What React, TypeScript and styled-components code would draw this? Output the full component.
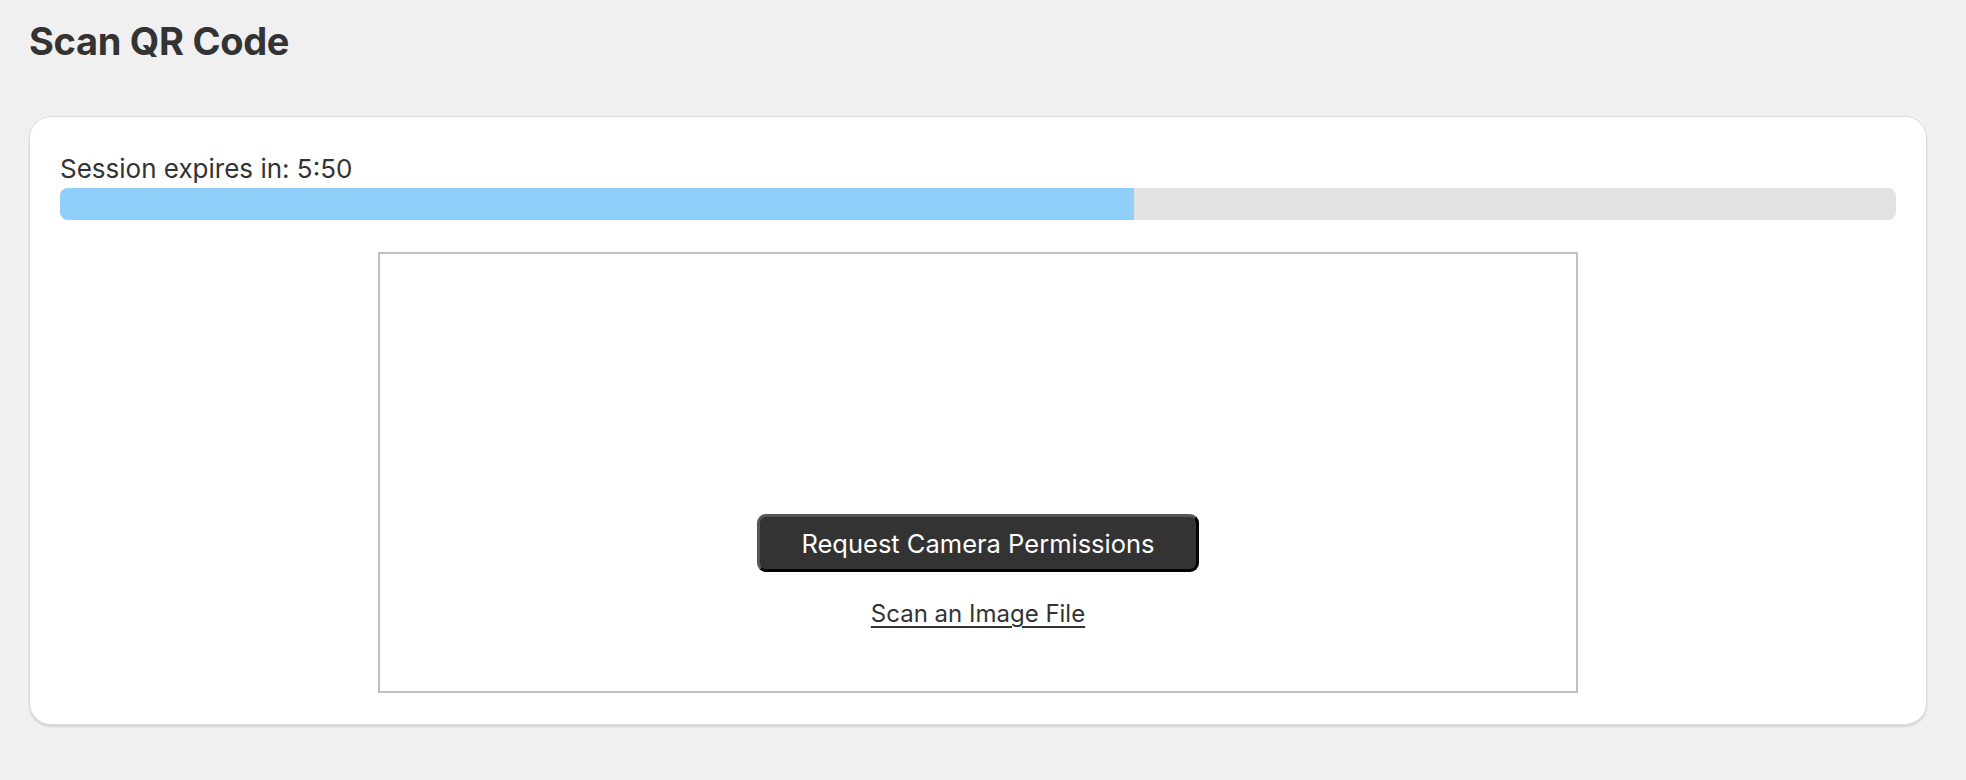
import React from "react";
import styled, { createGlobalStyle } from "styled-components";

const GlobalStyle = createGlobalStyle`
  html, body {
    margin: 0;
    padding: 0;
    background: #f0f0f0;
    font-family: Inter, "Noto Sans", "Liberation Sans", sans-serif;
    color: #333333;
  }
  * { box-sizing: border-box; }
`;

const Page = styled.main`
  padding: 0 39px 40px 29px;
`;

const Title = styled.h1`
  margin: 21px 0 0;
  font-size: 38px;
  line-height: 40px;
  font-weight: 700;
  color: #333333;
  letter-spacing: -0.3px;
`;

const Card = styled.section`
  margin-top: 55px;
  background: #ffffff;
  border: 1px solid #dcdcdc;
  border-radius: 22px;
  box-shadow: 0 2px 2px rgba(0, 0, 0, 0.12);
  padding: 30px 30px 31px;
  display: flex;
  flex-direction: column;
`;

const TimerLabel = styled.div`
  font-size: 26px;
  line-height: 30px;
  margin-top: 7px;
  color: #333333;
`;

const Track = styled.div`
  margin-top: 4px;
  height: 32px;
  border-radius: 8px;
  background: #e2e2e2;
  overflow: hidden;
  display: flex;
`;

const Fill = styled.div`
  height: 100%;
  background: #90cff9;
`;

const Reader = styled.div`
  margin: 32px auto 0;
  width: 1200px;
  height: 441px;
  border: 2px solid #c0c0c0;
  display: flex;
  flex-direction: column;
  align-items: center;
  padding-top: 260px;
`;

const PermissionButton = styled.button`
  width: 442px;
  height: 58px;
  background: #333333;
  color: #ffffff;
  font-family: inherit;
  font-size: 25.5px;
  border-width: 3px;
  border-style: solid;
  border-color: #555555 #000000 #000000 #555555;
  border-radius: 9px;
  padding: 0;
  cursor: pointer;
`;

const FileLink = styled.a`
  margin-top: 27px;
  font-size: 24px;
  line-height: 30px;
  color: #333333;
  text-decoration: underline;
  text-underline-offset: 4px;
  text-decoration-thickness: 1.5px;
  cursor: pointer;
`;

export default function App() {
  const remaining = 351;
  const total = 600;
  const pct = (remaining / total) * 100;
  return (
    <>
      <GlobalStyle />
      <Page>
        <Title>Scan QR Code</Title>
        <Card>
          <TimerLabel>Session expires in: 5:50</TimerLabel>
          <Track>
            <Fill style={{ width: `${pct}%` }} />
          </Track>
          <Reader>
            <PermissionButton>Request Camera Permissions</PermissionButton>
            <FileLink>Scan an Image File</FileLink>
          </Reader>
        </Card>
      </Page>
    </>
  );
}
